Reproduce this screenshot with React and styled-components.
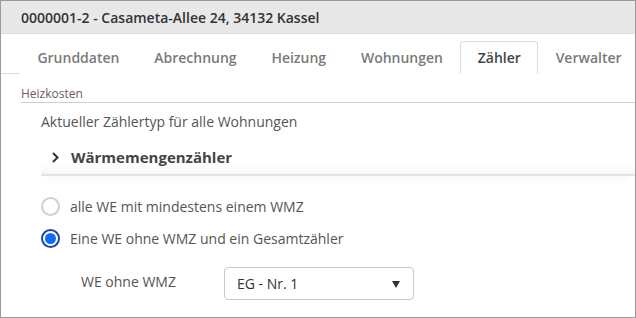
import React, { useState } from 'react';
import styled, { createGlobalStyle } from 'styled-components';

const GlobalStyle = createGlobalStyle`
  html, body {
    margin: 0;
    padding: 0;
    background: #fff;
  }
  body {
    font-family: 'Open Sans', 'Liberation Sans', sans-serif;
  }
  * {
    box-sizing: border-box;
  }
`;

const Frame = styled.div`
  width: 636px;
  height: 318px;
  border: 1px solid #9a9a9a;
  overflow: hidden;
  background: #fff;
`;

const Header = styled.div`
  height: 33px;
  background: #e8e8e8;
  border-bottom: 1px solid #dcdcdc;
  display: flex;
  align-items: center;
  padding-left: 20px;
  font-size: 14px;
  font-weight: 600;
  color: #333;
`;

const TabBar = styled.div`
  display: flex;
  margin-top: 7px;
  padding-left: 19px;
  border-bottom: 1px solid #ddd;
`;

const Tab = styled.button`
  font-family: inherit;
  font-size: 14px;
  font-weight: 600;
  height: 33px;
  padding: 0 16.4px;
  margin-bottom: -1px;
  background: #fff;
  color: ${({ active }) => (active ? '#444' : '#7a7a7a')};
  border: 1px solid ${({ active }) => (active ? '#ddd' : 'transparent')};
  border-bottom-color: ${({ active }) => (active ? '#fff' : 'transparent')};
  border-radius: 4px 4px 0 0;
  cursor: pointer;
`;

const Section = styled.div`
  padding-left: 20px;
`;

const Legend = styled.div`
  margin-top: 12px;
  font-size: 12px;
  line-height: 16px;
  color: #6e5d57;
  border-bottom: 1px solid #cfcfcf;
`;

const Content = styled.div`
  padding-left: 20px;
`;

const Caption = styled.div`
  margin-top: 9px;
  font-size: 14px;
  line-height: 20px;
  color: #555;
`;

const AccordionHead = styled.div`
  margin-top: 8px;
  height: 36px;
  display: flex;
  align-items: center;
  gap: 12px;
  padding-left: 11px;
  font-size: 15px;
  font-weight: 700;
  color: #444;
  border-bottom: 2px solid #e3e3e3;
  background: linear-gradient(to bottom, #fff 0%, #fff 60%, #f8f8f8 100%);
  box-shadow: 0 8px 10px -6px rgba(0, 0, 0, 0.04);
`;

const Options = styled.div`
  margin-top: 14px;
  display: flex;
  flex-direction: column;
`;

const RadioRow = styled.label`
  height: 32px;
  display: flex;
  align-items: center;
  gap: 10px;
  font-size: 14px;
  color: #555;
  cursor: pointer;
`;

const RadioDot = styled.span`
  width: 19px;
  height: 19px;
  border-radius: 50%;
  border: 2px solid ${({ checked }) => (checked ? '#2441a6' : '#cfcfcf')};
  background: #fff;
  display: flex;
  align-items: center;
  justify-content: center;

  &::after {
    content: '';
    width: 11px;
    height: 11px;
    border-radius: 50%;
    background: ${({ checked }) => (checked ? '#0a6cff' : 'transparent')};
  }
`;

const FieldRow = styled.div`
  margin-top: 13px;
  display: flex;
  align-items: center;
  padding-left: 40px;
`;

const FieldLabel = styled.div`
  width: 143px;
  font-size: 14px;
  color: #555;
  margin-top: -4px;
`;

const Select = styled.div`
  width: 190px;
  height: 33px;
  border: 1px solid #c8c8c8;
  border-radius: 4px;
  display: flex;
  align-items: center;
  justify-content: space-between;
  padding: 0 13px 0 12px;
  font-size: 14px;
  color: #333;
`;

const Caret = styled.span`
  width: 0;
  height: 0;
  border-left: 4.5px solid transparent;
  border-right: 4.5px solid transparent;
  border-top: 7px solid #333;
  margin-top: 2px;
`;

const tabs = ['Grunddaten', 'Abrechnung', 'Heizung', 'Wohnungen', 'Zähler', 'Verwalter'];

const options = [
  'alle WE mit mindestens einem WMZ',
  'Eine WE ohne WMZ und ein Gesamtzähler',
];

const App = () => {
  const [activeTab, setActiveTab] = useState('Zähler');
  const [choice, setChoice] = useState(1);

  return (
    <>
      <GlobalStyle />
      <Frame>
        <Header>0000001-2 - Casameta-Allee 24, 34132 Kassel</Header>

        <TabBar>
          {tabs.map((t) => (
            <Tab key={t} active={t === activeTab} onClick={() => setActiveTab(t)}>
              {t}
            </Tab>
          ))}
        </TabBar>

        <Section>
          <Legend>Heizkosten</Legend>
          <Content>
            <Caption>Aktueller Zählertyp für alle Wohnungen</Caption>

            <AccordionHead>
              <svg width="7" height="11" viewBox="0 0 7 11">
                <polyline points="1,1 5.5,5.5 1,10" fill="none" stroke="#333" strokeWidth="2" />
              </svg>
              Wärmemengenzähler
            </AccordionHead>

            <Options>
              {options.map((o, i) => (
                <RadioRow key={o} onClick={() => setChoice(i)}>
                  <RadioDot checked={choice === i} />
                  {o}
                </RadioRow>
              ))}
            </Options>

            <FieldRow>
              <FieldLabel>WE ohne WMZ</FieldLabel>
              <Select>
                EG - Nr. 1
                <Caret />
              </Select>
            </FieldRow>
          </Content>
        </Section>
      </Frame>
    </>
  );
};

export default App;
